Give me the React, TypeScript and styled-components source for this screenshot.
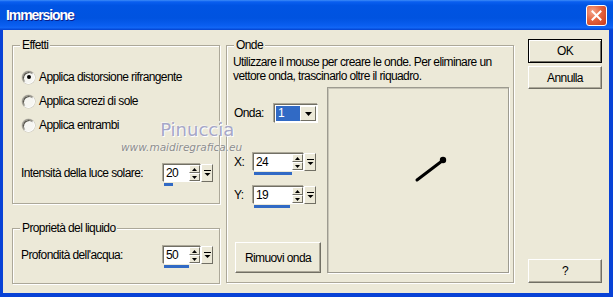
import React from 'react'
import styled, { createGlobalStyle } from 'styled-components'

const FONT = `"Liberation Sans", Arial, sans-serif`
const FACE = '#ECE9D8'
const SHADOW = '#716F64'
const ETCH = '#ACA899'
const SELECT = '#316AC5'

const GlobalStyle = createGlobalStyle`
  html, body { margin: 0; padding: 0; background: #fff; }
  body { font-family: ${FONT}; font-size: 12px; letter-spacing: -0.6px; color: #000; white-space: nowrap; }
  * { box-sizing: border-box; }
`

// W I N D O W
const Window = styled.div`
  position: relative;
  width: 613px;
  height: 297px;
  display: flex;
  flex-direction: column;
  background: #0842d6;
  overflow: hidden;
`

const TitleBar = styled.div`
  height: 30px;
  flex: none;
  display: flex;
  align-items: center;
  padding: 0 6px 0 6px;
  background: linear-gradient(180deg, #3d8cf7 0%, #0a5ff0 6%, #0054e3 18%, #0053e0 60%, #0a5ef0 85%, #1166f5 92%, #0342d0 100%);
`

const Title = styled.span`
  color: #fff;
  font-family: ${FONT};
  font-weight: bold;
  font-size: 14px;
  letter-spacing: -1.1px;
  text-shadow: 1px 1px 0 #0a1e8a;
`

const CloseBtn = styled.div`
  margin-left: auto;
  width: 21px;
  height: 21px;
  border: 1px solid #fff;
  border-radius: 3px;
  background: radial-gradient(circle at 30% 30%, #f4a58a 0%, #e5643f 45%, #c9391b 100%);
  display: flex;
  align-items: center;
  justify-content: center;
`

const Body = styled.div`
  flex: 1;
  margin: 0 4px 4px 3px;
  background: ${FACE};
  display: flex;
  align-items: flex-start;
  padding-left: 9px;
`

// G R O U P S
const LeftCol = styled.div`
  width: 208px;
  padding-top: 15px;
  display: flex;
  flex-direction: column;
  gap: 24px;
`

const Group = styled.div<{ $h: number; $w?: number }>`
  position: relative;
  height: ${(p) => p.$h}px;
  width: ${(p) => (p.$w ? `${p.$w}px` : 'auto')};
  border: 1px solid ${ETCH};
  box-shadow: inset 1px 1px 0 #fff, 1px 1px 0 #fff;
`

const Legend = styled.span`
  position: absolute;
  top: -8px;
  left: 7px;
  padding: 0 2px;
  line-height: 14px;
  background: ${FACE};
`

const Radios = styled.div`
  padding: 19px 0 0 9px;
  display: flex;
  flex-direction: column;
`

const RadioRow = styled.label`
  height: 24px;
  display: flex;
  align-items: center;
  gap: 4px;
`

const RadioDot = styled.span<{ $checked?: boolean }>`
  width: 13px;
  height: 13px;
  border-radius: 50%;
  background: #f6f6f2;
  border: 1px solid;
  border-color: #8f8d83 #fff #fff #8f8d83;
  box-shadow: inset 1px 1px 0 #55534b, 0 0 0 0.5px #c8c6ba;
  display: flex;
  align-items: center;
  justify-content: center;

  &::after {
    content: '';
    width: 4px;
    height: 4px;
    border-radius: 50%;
    background: ${(p) => (p.$checked ? '#000' : 'transparent')};
  }
`

const FieldRow = styled.div<{ $top: number }>`
  margin-top: ${(p) => p.$top}px;
  padding: 0 6px 0 8px;
  display: flex;
  align-items: flex-start;
  justify-content: space-between;
`

const FieldLabel = styled.span`
  line-height: 18px;
`

// S P I N   B O X
const Spin = styled.div`
  display: inline-flex;
  flex-direction: column;
  gap: 1px;
`

const SpinTop = styled.div`
  display: flex;
`

const Sunken = styled.div`
  display: flex;
  height: 18px;
  background: #fff;
  border: 1px solid;
  border-color: ${SHADOW} #fff #fff ${SHADOW};
  box-shadow: -1px -1px 0 ${ETCH};
`

const SpinValue = styled.div<{ $w: number }>`
  width: ${(p) => p.$w}px;
  line-height: 16px;
  padding-left: 2px;
`

const Arrows = styled.div`
  width: 11px;
  display: flex;
  flex-direction: column;
`

const Raised = styled.div`
  background: ${FACE};
  border: 1px solid;
  border-color: #fff ${SHADOW} ${SHADOW} #fff;
  display: flex;
  align-items: center;
  justify-content: center;
`

const ArrowBtn = styled(Raised)`
  flex: 1;
`

const DropBtn = styled(Raised)`
  width: 12px;
  height: 18px;
`

const Bar = styled.div`
  height: 3px;
  margin-left: 1px;
  background: ${SELECT};
`

const TinyUp = () => (
  <svg width="5" height="3" viewBox="0 0 5 3"><path d="M2.5 0L5 3H0z" fill="#000" /></svg>
)
const TinyDown = () => (
  <svg width="5" height="3" viewBox="0 0 5 3"><path d="M0 0h5L2.5 3z" fill="#000" /></svg>
)

const SpinBox: React.FC<{ value: string; width: number; fill: number }> = ({ value, width, fill }) => (
  <Spin>
    <SpinTop>
      <Sunken>
        <SpinValue $w={width}>{value}</SpinValue>
        <Arrows>
          <ArrowBtn><TinyUp /></ArrowBtn>
          <ArrowBtn><TinyDown /></ArrowBtn>
        </Arrows>
      </Sunken>
      <DropBtn>
        <svg width="7" height="8" viewBox="0 0 7 8">
          <path d="M0 1.5h7" stroke="#000" strokeWidth="1" />
          <path d="M0.5 4h6L3.5 7z" fill="#000" />
        </svg>
      </DropBtn>
    </SpinTop>
    <Bar style={{ width: Math.round(width * fill) }} />
  </Spin>
)

// O N D E
const Onde = styled(Group)`
  margin: 15px 0 0 6px;
  padding: 9px 4px 8px 6px;
  display: flex;
  flex-direction: column;
`

const Hint = styled.p`
  margin: 0;
  line-height: 14px;
`

const WaveArea = styled.div`
  margin-top: 4px;
  flex: 1;
  display: flex;
  justify-content: space-between;
`

const Controls = styled.div`
  display: flex;
  flex-direction: column;
  padding-left: 1px;
`

const CtrlRow = styled.div<{ $top: number }>`
  margin-top: ${(p) => p.$top}px;
  display: flex;
  align-items: flex-start;
`

const CtrlLabel = styled.span<{ $w: number }>`
  width: ${(p) => p.$w}px;
  line-height: 18px;
`

const Combo = styled.div`
  display: flex;
  width: 44px;
  height: 19px;
  padding: 1px;
  background: #fff;
  border: 1px solid;
  border-color: ${SHADOW} #fff #fff ${SHADOW};
  box-shadow: -1px -1px 0 ${ETCH};
`

const ComboValue = styled.div`
  flex: 1;
  background: ${SELECT};
  color: #fff;
  line-height: 15px;
  padding-left: 2px;
`

const ComboBtn = styled(Raised)`
  width: 16px;
`

const Canvas = styled.div`
  width: 182px;
  height: 186px;
  border: 1px solid #9d9b90;
  box-shadow: inset 1px 1px 0 #c9c6b8, 1px 1px 0 #fff;
`

// B U T T O N S
const Button = styled.div<{ $w: number; $h: number; $default?: boolean }>`
  width: ${(p) => p.$w}px;
  height: ${(p) => p.$h}px;
  display: flex;
  align-items: center;
  justify-content: center;
  background: ${FACE};
  border: 1px solid;
  border-color: ${(p) => (p.$default ? '#000' : `#fff ${SHADOW} ${SHADOW} #fff`)};
  box-shadow: ${(p) =>
    p.$default ? `inset 1px 1px 0 #fff, inset -1px -1px 0 ${SHADOW}` : `inset -1px -1px 0 ${ETCH}`};
`

const BtnCol = styled.div`
  margin-left: 14px;
  height: 100%;
  padding: 9px 0 10px;
  display: flex;
  flex-direction: column;
  gap: 3px;
`

const HelpBtn = styled(Button)`
  margin-top: auto;
`

const RemoveBtn = styled(Button)`
  margin-top: auto;
  margin-bottom: 1px;
  margin-left: 1px;
`

// W A T E R M A R K
const Watermark = styled.div`
  position: absolute;
  left: 121px;
  top: 119px;
  display: flex;
  flex-direction: column;
  align-items: flex-end;
  letter-spacing: 0;
  pointer-events: none;
`

const MarkName = styled.span`
  margin-right: 8px;
  font-family: "DejaVu Sans", sans-serif;
  font-size: 18px;
  line-height: 22px;
  color: #a6a7c8;
  text-shadow: 1px 1px 0 #fff, -1px -1px 0 #f4f3ee;
`

const MarkSite = styled.span`
  font-family: "DejaVu Sans", sans-serif;
  font-style: italic;
  font-size: 10.5px;
  line-height: 12px;
  color: #8d8d8d;
  text-shadow: 0 0 2px #fff;
`

export default function App() {
  return (
    <>
      <GlobalStyle />
      <Window>
        <TitleBar>
          <Title>Immersione</Title>
          <CloseBtn>
            <svg width="11" height="11" viewBox="0 0 11 11">
              <path d="M1.5 1.5l8 8M9.5 1.5l-8 8" stroke="#fff" strokeWidth="2" strokeLinecap="square" />
            </svg>
          </CloseBtn>
        </TitleBar>
        <Body>
          <LeftCol>
            <Group $h={159}>
              <Legend>Effetti</Legend>
              <Radios>
                <RadioRow><RadioDot $checked />Applica distorsione rifrangente</RadioRow>
                <RadioRow><RadioDot />Applica screzi di sole</RadioRow>
                <RadioRow><RadioDot />Applica entrambi</RadioRow>
              </Radios>
              <FieldRow $top={27}>
                <FieldLabel>Intensità della luce solare:</FieldLabel>
                <SpinBox value="20" width={25} fill={0.36} />
              </FieldRow>
            </Group>
            <Group $h={56}>
              <Legend>Proprietà del liquido</Legend>
              <FieldRow $top={17}>
                <FieldLabel>Profondità dell'acqua:</FieldLabel>
                <SpinBox value="50" width={25} fill={1} />
              </FieldRow>
            </Group>
          </LeftCol>
          <Onde $h={238} $w={288}>
            <Legend>Onde</Legend>
            <Hint>
              Utilizzare il mouse per creare le onde. Per eliminare un
              <br />
              vettore onda, trascinarlo oltre il riquadro.
            </Hint>
            <WaveArea>
              <Controls>
                <CtrlRow $top={17}>
                  <CtrlLabel $w={40}>Onda:</CtrlLabel>
                  <Combo>
                    <ComboValue>1</ComboValue>
                    <ComboBtn>
                      <svg width="7" height="4" viewBox="0 0 7 4"><path d="M0 0h7L3.5 4z" fill="#000" /></svg>
                    </ComboBtn>
                  </Combo>
                </CtrlRow>
                <CtrlRow $top={30}>
                  <CtrlLabel $w={19}>X:</CtrlLabel>
                  <SpinBox value="24" width={38} fill={1} />
                </CtrlRow>
                <CtrlRow $top={11}>
                  <CtrlLabel $w={19}>Y:</CtrlLabel>
                  <SpinBox value="19" width={38} fill={0.95} />
                </CtrlRow>
                <RemoveBtn $w={86} $h={31}>Rimuovi onda</RemoveBtn>
              </Controls>
              <Canvas>
                <svg width="180" height="184" viewBox="0 0 180 184">
                  <path d="M89 92L114 73" stroke="#000" strokeWidth="3" strokeLinecap="round" />
                  <circle cx="115" cy="72" r="3.2" fill="#000" />
                </svg>
              </Canvas>
            </WaveArea>
          </Onde>
          <BtnCol>
            <Button $w={74} $h={24} $default>OK</Button>
            <Button $w={74} $h={23}>Annulla</Button>
            <HelpBtn $w={74} $h={24}>?</HelpBtn>
          </BtnCol>
        </Body>
        <Watermark>
          <MarkName>Pinuccia</MarkName>
          <MarkSite>www.maidiregrafica.eu</MarkSite>
        </Watermark>
      </Window>
    </>
  )
}
